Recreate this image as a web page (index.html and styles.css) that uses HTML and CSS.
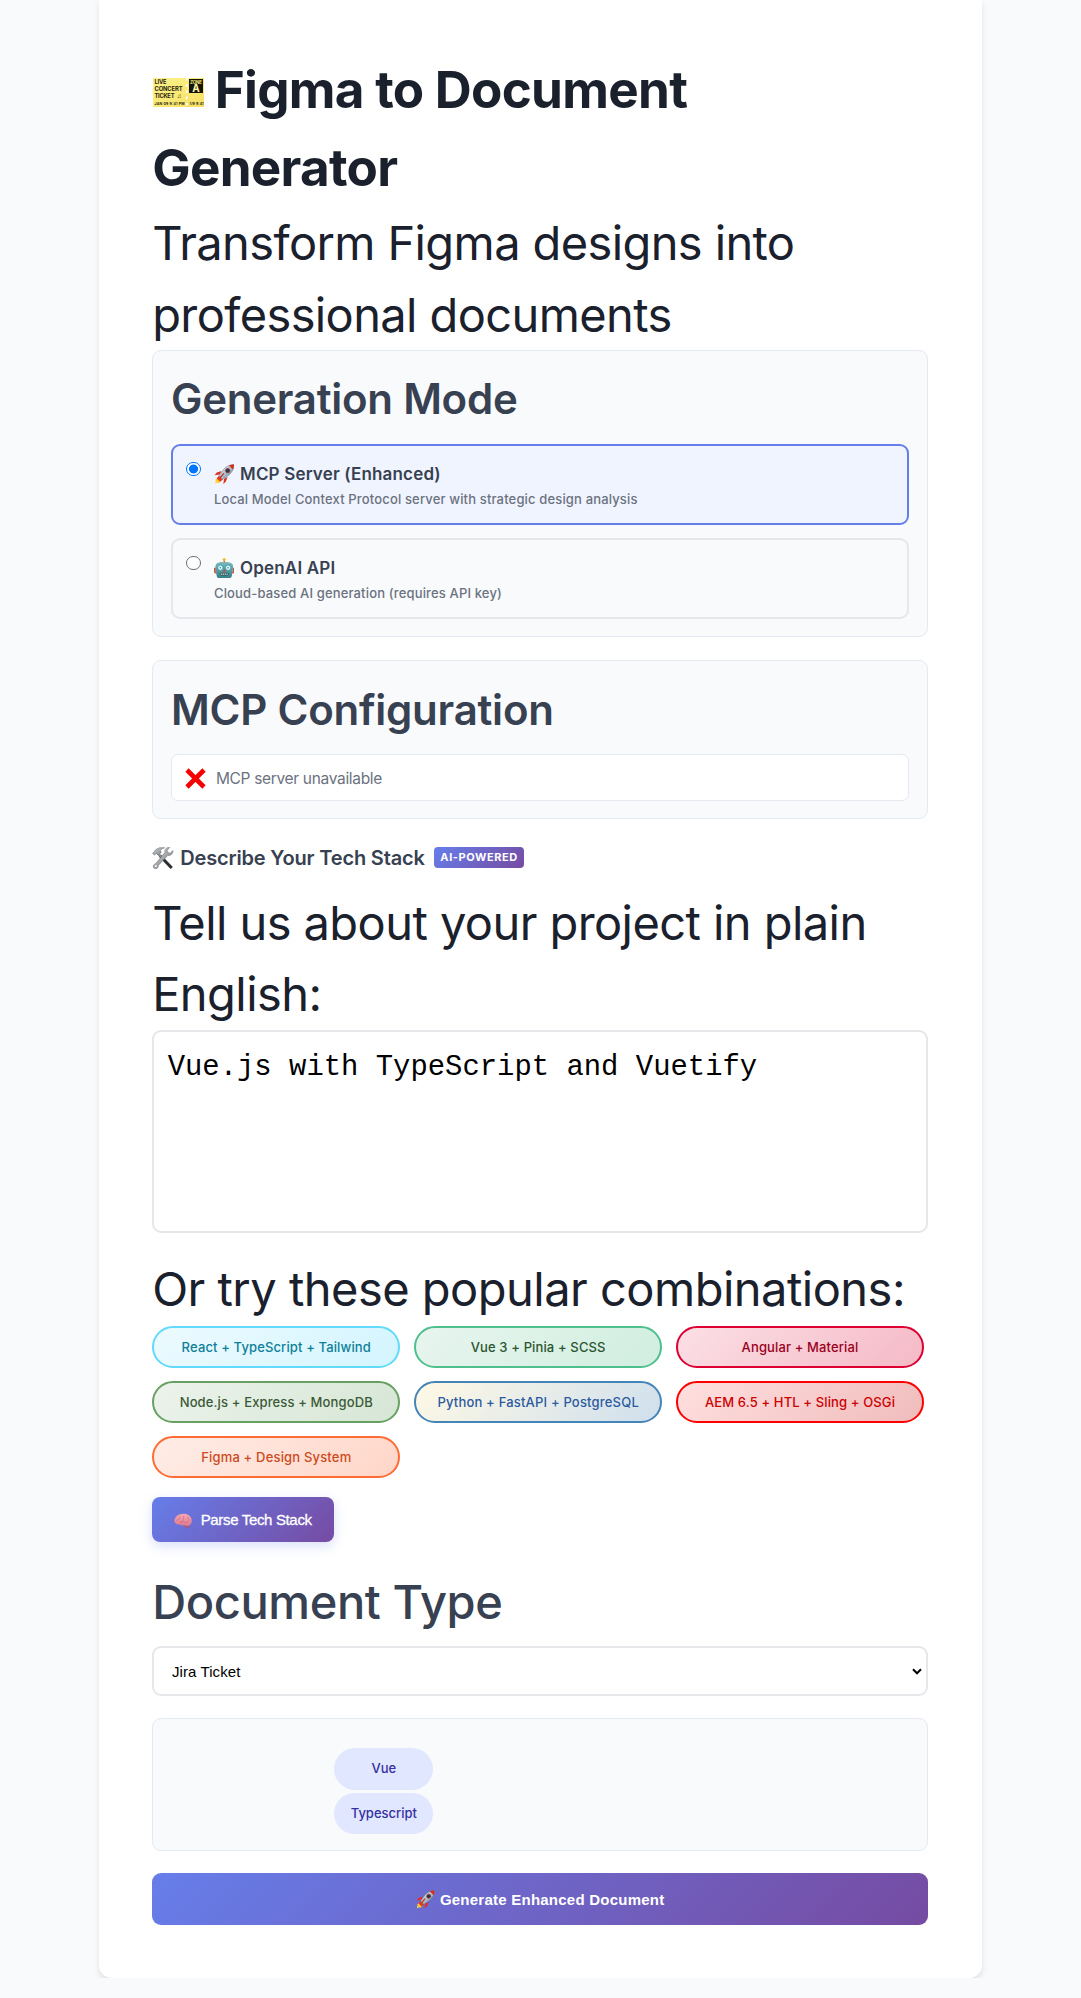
FILE: index.html
```
<!DOCTYPE html>
<html lang="en">
<head>
<meta charset="utf-8">
<title>Figma to Document Generator</title>
<link rel="stylesheet" href="styles.css">
</head>
<body>
<svg width="0" height="0" class="defs" aria-hidden="true">
  <defs>
    <linearGradient id="hull" x1="0" y1="0" x2="1" y2="1"><stop offset="0" stop-color="#eef3f7"/><stop offset=".55" stop-color="#a9b9c6"/><stop offset="1" stop-color="#53687a"/></linearGradient>
    <linearGradient id="flame" x1="1" y1="0" x2="0" y2="1"><stop offset="0" stop-color="#ff5a1f"/><stop offset=".5" stop-color="#ffc21a"/><stop offset="1" stop-color="#ffe75a"/></linearGradient>
    <linearGradient id="teal" x1="0" y1="0" x2="0" y2="1"><stop offset="0" stop-color="#7fb9bd"/><stop offset="1" stop-color="#347f86"/></linearGradient>
    <linearGradient id="steel" x1="0" y1="0" x2="1" y2="1"><stop offset="0" stop-color="#d3d6d9"/><stop offset="1" stop-color="#74797e"/></linearGradient>
    <linearGradient id="paper" x1="0" y1="0" x2="1" y2="1"><stop offset="0" stop-color="#fdf38b"/><stop offset="1" stop-color="#f6df62"/></linearGradient>
    <linearGradient id="cortex" x1="0" y1="0" x2="0" y2="1"><stop offset="0" stop-color="#f8a9b4"/><stop offset="1" stop-color="#dd7a90"/></linearGradient>
    <symbol id="rocket" viewBox="0 0 22 22">
      <path d="M8 7.5 3 9.2.6 12l5.6-.6zM14.500 14 12.800 18.800 10 21.500l.8-5.700z" fill="#e0301e"/>
      <path d="M6 13 1 17.500l1-.1L.8 21.200l3.700-1.400.2 1.200L9.200 16z" fill="url(#flame)"/>
      <path d="M5 12.500 3 15.500 6.500 19l3-2.300z" fill="#e8391c"/>
      <path d="M21.500.5c-5 .2-9.500 2.500-12.500 7L5.400 12.800l3.700 3.800L14.500 13c4.500-3 6.800-7.500 7-12.500z" fill="url(#hull)" stroke="#5b6b78" stroke-width=".5"/>
      <path d="M21.500.5c-2 0-3.800.4-5.500 1.100l4.400 4.400c.7-1.700 1.100-3.500 1.100-5.500z" fill="#d92a1c"/>
      <circle cx="14.700" cy="7.200" r="2.300" fill="#26384f" stroke="#9e2b24" stroke-width=".8"/>
      <path d="M10.500 10 6.500 14.800" stroke="#c8281c" stroke-width="1.300"/>
    </symbol>
    <symbol id="robot" viewBox="0 0 20 20">
      <path d="M0 9.500h3v5.500H1.500Q0 15 0 13.500zM20 9.500h-3v5.500h1.500q1.500 0 1.500-1.500z" fill="#d64a3c"/>
      <path d="M10 1.500V5" stroke="#d04a2e" stroke-width="1.200"/>
      <circle cx="10" cy="1.500" r="1.500" fill="#f5b921"/>
      <path d="M1.500 8q0-4 8.500-4t8.500 4v6h-17z" fill="#86bfc2"/>
      <path d="M1.500 8q0-4 8.500-4t8.500 4l-1 9q-.3 2.700-3 2.700h-9q-2.700 0-3-2.700z" fill="url(#teal)"/>
      <circle cx="6.200" cy="9.500" r="2.600" fill="#dffbff" stroke="#2b96a4" stroke-width=".8"/>
      <circle cx="13.800" cy="9.500" r="2.600" fill="#dffbff" stroke="#2b96a4" stroke-width=".8"/>
      <circle cx="6.200" cy="9.500" r=".8" fill="#2c8d99"/><circle cx="13.800" cy="9.500" r=".8" fill="#2c8d99"/>
      <path d="m10 10.500 1.400 2.700H8.600z" fill="#d73d2c"/>
      <rect x="5.500" y="14.300" width="9" height="2.700" rx="1.300" fill="#284f56"/>
      <path d="M6.500 15.700h7" stroke="#e3e9e8" stroke-width="1.200" stroke-dasharray="1.300 .6"/>
    </symbol>
  </defs>
</svg>

<main class="container">
  <h1 class="title"><svg class="ticket" viewBox="0 0 51 29">
      <path d="M0 0h51v29H0z" fill="url(#paper)"/>
      <path d="M33.700 0v29" stroke="#fff" stroke-width="1.800" stroke-dasharray="2.600 3.600"/>
      <path d="M36 1h14v14H36z" fill="#15140a"/>
      <g font-family="Inter, sans-serif" font-weight="700" fill="#2b2810">
        <text x="1.500" y="6.200" font-size="5.800" textLength="12">LIVE</text>
        <text x="1.500" y="12.800" font-size="5.800" textLength="28">CONCERT</text>
        <text x="1.500" y="19.500" font-size="5.800" textLength="20">TICKET</text>
        <text x="24" y="19.500" font-size="6">♫</text>
        <text x="1.500" y="26.700" font-size="3.500" textLength="30">JAN 09  9:41 PM</text>
        <text x="36.500" y="26.700" font-size="3.500" textLength="14">1/9  9:41</text>
        <text x="37" y="5.500" font-size="4.500" textLength="12" fill="#f9e978">ZONE</text>
        <text x="43.100" y="14" font-size="10" text-anchor="middle" fill="#fff7a5">A</text>
      </g>
    </svg>Figma to Document<br>Generator</h1>
  <p class="lead">Transform Figma designs into professional documents</p>

  <section class="card">
    <h2 class="card-title">Generation Mode</h2>
    <div class="options">
      <label class="option option-active">
        <span class="radio radio-on"></span>
        <span class="option-body">
          <span class="option-name"><svg class="emoji"><use href="#rocket"/></svg>MCP Server (Enhanced)</span>
          <span class="option-desc">Local Model Context Protocol server with strategic design analysis</span>
        </span>
      </label>
      <label class="option">
        <span class="radio"></span>
        <span class="option-body">
          <span class="option-name"><svg class="emoji"><use href="#robot"/></svg>OpenAI API</span>
          <span class="option-desc">Cloud-based AI generation (requires API key)</span>
        </span>
      </label>
    </div>
  </section>

  <section class="card card-config">
    <h2 class="card-title config-title">MCP Configuration</h2>
    <div class="status">
      <svg class="cross" viewBox="0 0 21 21"><path d="M2 2 19 19M19 2 2 19" stroke="#f60000" stroke-width="4.600"/></svg>
      <span>MCP server unavailable</span>
    </div>
  </section>

  <h3 class="stack-title">
    <svg class="tools" viewBox="0 0 21 22">
      <path d="M7.500 8.500 19.500 21" stroke="#2b2c2e" stroke-width="3"/>
      <path d="M5.500 6.500 9 10" stroke="#8a8e92" stroke-width="2.200"/>
      <path d="M.3 6.500 3.500 2.600Q6.500-.3 12.500.8 9 1.500 8.200 3.500l.8 2-3 2.700-1.800-1.700-2 1.500z" fill="url(#steel)" stroke="#6c7074" stroke-width=".5"/>
      <path d="M20.700 3.500 18 6.200l-2.500-.7-.6-2.300L17.500.5c-2.900-.5-5.400 1.700-4.900 5L3.300 16.800c-2.500.3-3 3.600-1.200 4.600 2.100 1 4.300-.6 3.900-3L15.500 8.500c3.200.4 5.500-2 5.200-5z" fill="url(#steel)" stroke="#63676b" stroke-width=".5"/>
      <circle cx="3.600" cy="19" r=".9" fill="#fff"/>
    </svg>
    <span class="stack-text">Describe Your Tech Stack</span>
    <span class="badge">AI-POWERED</span>
  </h3>

  <p class="lead prompt">Tell us about your project in plain English:</p>
  <textarea class="stack-input">Vue.js with TypeScript and Vuetify</textarea>

  <p class="lead combos">Or try these popular combinations:</p>
  <div class="chips">
    <button class="chip react">React + TypeScript + Tailwind</button>
    <button class="chip vue">Vue 3 + Pinia + SCSS</button>
    <button class="chip angular">Angular + Material</button>
    <button class="chip node">Node.js + Express + MongoDB</button>
    <button class="chip python">Python + FastAPI + PostgreSQL</button>
    <button class="chip aem">AEM 6.5 + HTL + Sling + OSGi</button>
    <button class="chip figma">Figma + Design System</button>
  </div>

  <button class="parse">
    <svg class="brain" viewBox="0 0 18 16">
      <path d="M9.500 11 12.500 15.500l2.500-1.300-1-4z" fill="#b9566c"/>
      <path d="M.6 9C-.2 6 2 2.500 6 1.200c4.700-1.500 10.300.4 11.500 4.700.8 3-.4 6-2.700 6.800-1.700.5-3.300-.2-4.800-.8-2 .8-4 .2-5-.6-1.900.2-3.700-.7-4.400-2.300z" fill="url(#cortex)"/>
      <path d="M2 8c1-2 2.500-.5 3.500-2S4.500 4 6 2.800M7 10c-.5-2 2-1.500 2.500-3S8 4.500 10 2.800M11.500 10c1-2 2.800-.3 3.500-2.500S13 5.500 14 3.700M5 9c2 .3 4-1 7 .7" fill="none" stroke="#c4607a" stroke-width=".5"/>
    </svg>
    <span>Parse Tech Stack</span>
  </button>

  <label class="field-label">Document Type</label>
  <div class="select">
    <span>Jira Ticket</span>
    <svg class="chevron" viewBox="0 0 10 7"><path d="m1 1.300 4 4 4-4" fill="none" stroke="#000" stroke-width="2"/></svg>
  </div>

  <div class="tags">
    <span class="tag">Vue</span>
    <span class="tag">Typescript</span>
  </div>

  <button class="generate"><svg class="launch"><use href="#rocket"/></svg><span>Generate Enhanced Document</span></button>
</main>
</body>
</html>
```
FILE: styles.css
```
* {
  box-sizing: border-box;
}

body {
  margin: 0;
  background: #f9fafc;
  color: #1a202c;
  font-family: Inter, "Noto Sans", sans-serif;
}

.defs {
  display: block;
  height: 0;
}

.container {
  width: 882.8px;
  height: 1977.8px;
  margin-left: 98.8px;
  padding: 49.7px 53.4px 0;
  background: #fff;
  border-radius: 0 0 13px 13px;
  box-shadow: 0 4px 6px rgba(0, 0, 0, 0.1);
}

.title {
  margin: 0 0 0.8px;
  font-size: 51.2px;
  font-weight: 700;
  line-height: 78.4px;
  letter-spacing: -0.72px;
}

.ticket {
  width: 51px;
  height: 29px;
  margin: 0 11px 0 0.5px;
  vertical-align: 1px;
  letter-spacing: 0;
}

.lead {
  margin: 0;
  font-size: 47px;
  line-height: 71.3px;
  letter-spacing: -0.61px;
}

.card {
  height: 286.7px;
  padding: 16.6px 17.8px;
  background: #f9fafc;
  border: 1px solid #e5e9f1;
  border-radius: 9px;
}

.card-config {
  height: 159.3px;
  margin-top: 23.3px;
}

.card-title {
  margin: 0 0 12px;
  color: #374151;
  font-size: 42px;
  font-weight: 600;
  line-height: 64.8px;
  letter-spacing: -0.25px;
}

.config-title {
  padding-top: 0.8px;
  margin-bottom: 11.2px;
  letter-spacing: -0.23px;
}

.options {
  display: grid;
  gap: 13.6px;
}

.option {
  display: flex;
  height: 80.4px;
  padding: 14.5px 13.4px;
  border: 2px solid #e5e7eb;
  border-radius: 9px;
}

.option-active {
  border-color: #667eea;
  background: #f0f4ff;
}

.radio {
  width: 14.6px;
  height: 14.6px;
  margin: 1px 13px 0 0;
  border: 1px solid #6f6f6f;
  border-radius: 50%;
  background: #fff;
}

.radio-on {
  border-color: #0075ff;
  background: radial-gradient(circle, #0075ff 4.2px, #fff 4.8px);
}

.option-body {
  display: flex;
  flex-direction: column;
  gap: 2.2px;
}

.option-name {
  display: flex;
  align-items: center;
  gap: 5.6px;
  color: #374151;
  font-size: 17px;
  font-weight: 600;
  line-height: 26px;
  letter-spacing: 0.17px;
}

.emoji {
  width: 20.5px;
  height: 20.5px;
}

.option-desc {
  color: #6b7280;
  font-size: 13px;
  font-weight: 500;
  line-height: 20px;
  letter-spacing: 0.153px;
}

.status {
  display: flex;
  align-items: center;
  gap: 9.6px;
  height: 46.6px;
  padding: 1px 13.3px 0;
  border: 1px solid #e5e9f1;
  border-radius: 7px;
  background: #fff;
  color: #6b7280;
  font-size: 15.5px;
  letter-spacing: -0.32px;
}

.cross {
  width: 21px;
  height: 21px;
}

.stack-title {
  display: flex;
  align-items: center;
  margin: 23.4px 0 14.5px;
  height: 30px;
  color: #374151;
  font-size: 20px;
  font-weight: 600;
  letter-spacing: -0.16px;
}

.tools {
  width: 21.5px;
  height: 22px;
  margin-right: 6.5px;
}

.stack-text {
  margin-right: 9px;
}

.badge {
  width: 90.7px;
  height: 21px;
  border-radius: 4px;
  background: linear-gradient(135deg, #667eea, #764ba2);
  color: #fff;
  font-size: 11px;
  font-weight: 700;
  line-height: 20.5px;
  letter-spacing: 0.58px;
  text-align: center;
}

.prompt {
  letter-spacing: -0.565px;
}

.stack-input {
  display: block;
  width: 776px;
  height: 203.4px;
  margin-bottom: 20.4px;
  padding: 14.5px 13.5px;
  border: 2px solid #e5e7eb;
  border-radius: 9px;
  color: #000;
  font: 28.9px/43.2px "Liberation Mono", monospace;
  resize: none;
}

.combos {
  letter-spacing: -0.51px;
}

.chips {
  display: grid;
  grid-template-columns: repeat(3, 248.2px);
  gap: 13.4px 13.7px;
  margin-top: 1.5px;
}

.chip {
  height: 41.7px;
  padding: 0;
  border: 2px solid;
  border-radius: 21px;
  font: 500 13px Inter, sans-serif;
  letter-spacing: 0.13px;
  text-align: center;
}

.react { border-color: #61dafb; color: #0e7f98; background: linear-gradient(135deg, #ecfaff, #d4f5fe); }
.vue { border-color: #4fc08d; color: #2c5530; background: linear-gradient(135deg, #e8f5ee, #d0eee0); }
.angular { border-color: #dd0031; color: #9b0022; background: linear-gradient(135deg, #fbdfe5, #f5bac6); }
.node { border-color: #68a063; color: #3a5a37; background: linear-gradient(135deg, #ecf3eb, #d6e6d5); }
.python { border-color: #4584b6; color: #2c5aa0; background: linear-gradient(135deg, #fff9e5, #cfdfed); letter-spacing: 0.188px; }
.aem { border-color: #ff0000; color: #cc0000; background: linear-gradient(135deg, #ffdfdf, #f0bcbc); }
.figma { border-color: #ff6b35; color: #cc4a20; background: linear-gradient(135deg, #ffede7, #ffd6c8); letter-spacing: 0.176px; }

.parse {
  display: flex;
  align-items: center;
  gap: 8.5px;
  width: 182px;
  height: 45.3px;
  margin-top: 19px;
  padding: 0 0 1px 22px;
  border: 0;
  border-radius: 8px;
  background: linear-gradient(135deg, #667eea, #764ba2);
  box-shadow: 0 4px 12px rgba(102, 126, 234, 0.25);
  color: #fff;
  font: 15px "Liberation Sans", Arial, sans-serif;
  letter-spacing: -0.34px;
  -webkit-text-stroke: 0.3px #fff;
}

.brain {
  width: 18px;
  height: 16px;
  margin-top: 3px;
}

.field-label {
  display: block;
  margin: 23.6px 0 8.6px;
  color: #374151;
  font-size: 47px;
  font-weight: 500;
  line-height: 71.3px;
  letter-spacing: -0.39px;
}

.select {
  display: flex;
  align-items: center;
  justify-content: space-between;
  height: 50.4px;
  padding: 0 4px 0 17.8px;
  border: 2px solid #e5e7eb;
  border-radius: 9px;
  color: #000;
  font: 15px "Liberation Sans", Arial, sans-serif;
  letter-spacing: 0.09px;
}

.chevron {
  width: 10px;
  height: 7px;
}

.tags {
  display: flex;
  flex-direction: column;
  gap: 2.7px;
  height: 132.7px;
  margin: 22.1px 0 21.6px;
  padding: 29px 0 0 181px;
  border: 1px solid #e5e9f1;
  border-radius: 9px;
  background: #f9fafc;
}

.tag {
  width: 99.3px;
  height: 41.7px;
  border-radius: 21px;
  background: #e0e7ff;
  color: #3730a3;
  font-size: 13px;
  font-weight: 500;
  line-height: 41px;
  text-align: center;
}

.generate {
  display: flex;
  align-items: center;
  justify-content: center;
  gap: 5px;
  width: 100%;
  height: 52.2px;
  padding: 2px 0 0;
  border: 0;
  border-radius: 9px;
  background: linear-gradient(135deg, #667eea, #764ba2);
  color: #fff;
  font: 700 15px "Liberation Sans", Arial, sans-serif;
  letter-spacing: 0.24px;
}

.launch {
  width: 19px;
  height: 19px;
}
```
